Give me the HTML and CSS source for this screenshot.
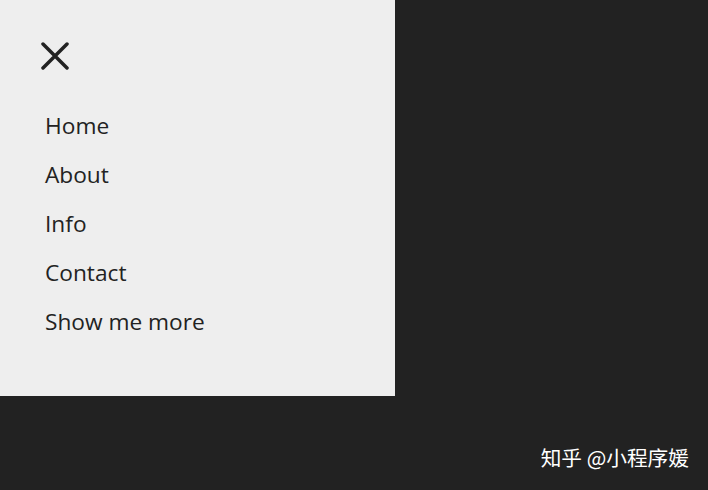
FILE: index.html
```html
<!DOCTYPE html>
<html lang="en">
<head>
<meta charset="UTF-8">
<meta name="viewport" content="width=device-width, initial-scale=1.0">
<title>Side Menu</title>
<link rel="stylesheet" href="styles.css">
</head>
<body>

<div class="sidenav">
    <button class="close-button" aria-label="Close">
        <svg width="28" height="28" viewBox="0 0 28 28">
            <path d="M2 2 L26 26 M26 2 L2 26" stroke="#222" stroke-width="3.5" stroke-linecap="round" fill="none"/>
        </svg>
    </button>
    <nav class="menu">
        <a href="#">Home</a>
        <a href="#">About</a>
        <a href="#">Info</a>
        <a href="#">Contact</a>
        <a href="#">Show me more</a>
    </nav>
</div>

<div class="watermark">知乎 @小程序媛</div>

</body>
</html>
```

FILE: styles.css
```css
body {
    font-family: "Open Sans", "Noto Sans", sans-serif;
    background-color: #222;
    margin: 0;
    height: 490px;
    position: relative;
    overflow: hidden;
}

.sidenav {
    width: 395px;
    height: 396px;
    background-color: #eee;
    box-sizing: border-box;
    padding: 42px 0 0 41px;
}

.close-button {
    display: block;
    background: none;
    border: none;
    padding: 0;
    cursor: pointer;
    width: 28px;
    height: 28px;
}

.close-button svg {
    display: block;
}

.menu {
    display: flex;
    flex-direction: column;
    margin-top: 31px;
    padding-left: 4px;
}

.menu a {
    color: #222;
    text-decoration: none;
    font-size: 22.7px;
    line-height: 49px;
}

.watermark {
    position: absolute;
    right: 19px;
    bottom: 18px;
    color: #fff;
    font-family: "Noto Sans CJK SC", sans-serif;
    font-size: 20.7px;
}
```
